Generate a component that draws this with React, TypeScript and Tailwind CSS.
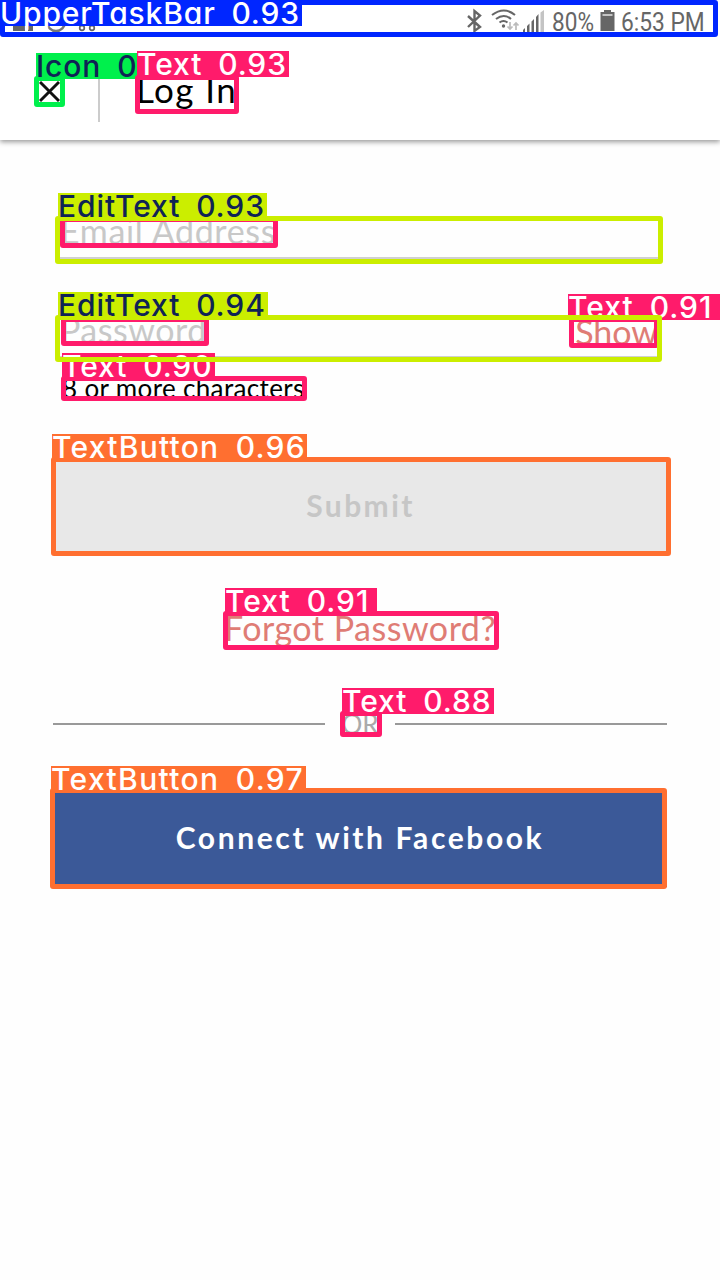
import React from "react";

type Mark = {
  label: string;
  box: string;
  tag: string;
};

const tagFont =
  "absolute whitespace-pre font-['Inter',sans-serif] font-medium text-[30px] leading-[27px] [font-feature-settings:'cv11'] ";

const marks: Mark[] = [
  {
    label: "Text 0.91",
    box: "left-[569px] top-[317px] w-[90px] h-[31px] border-[#ff1b6b]",
    tag: "left-[568px] top-[294px] w-[152px] h-[26px] bg-[#ff1b6b] text-white tracking-[1px] [word-spacing:7px]",
  },
  {
    label: "",
    box: "left-[60px] top-[217px] w-[218px] h-[31px] border-[#ff1b6b]",
    tag: "hidden",
  },
  {
    label: "",
    box: "left-[61px] top-[317px] w-[148px] h-[29px] border-[#ff1b6b]",
    tag: "hidden",
  },
  {
    label: "Text 0.90",
    box: "left-[61px] top-[376px] w-[246px] h-[25px] border-[#ff1b6b]",
    tag: "left-[62px] top-[353px] w-[153px] h-[26px] bg-[#ff1b6b] text-white tracking-[0.9px] [word-spacing:7px]",
  },
  {
    label: "EditText 0.93",
    box: "left-[55px] top-[216px] w-[608px] h-[48px] border-[#cbee00]",
    tag: "left-[58px] top-[193px] w-[209px] h-[26px] bg-[#cbee00] text-[#0f2355] tracking-[0.9px] [word-spacing:7px]",
  },
  {
    label: "EditText 0.94",
    box: "left-[55px] top-[315px] w-[607px] h-[47px] border-[#cbee00]",
    tag: "left-[58px] top-[292px] w-[210px] h-[26px] bg-[#cbee00] text-[#0f2355] tracking-[0.9px] [word-spacing:7px]",
  },
  {
    label: "Icon 0",
    box: "left-[34px] top-[76px] w-[31px] h-[31px] border-[#00f04c]",
    tag: "left-[36px] top-[53px] w-[101px] h-[26px] bg-[#00f04c] text-[#0f2355] tracking-[0.9px] [word-spacing:7px]",
  },
  {
    label: "Text 0.93",
    box: "left-[135px] top-[75px] w-[104px] h-[39px] border-[#ff1b6b]",
    tag: "left-[137px] top-[51px] w-[152px] h-[26px] bg-[#ff1b6b] text-white tracking-[0.9px] [word-spacing:7px]",
  },
  {
    label: "TextButton 0.96",
    box: "left-[51px] top-[457px] w-[620px] h-[99px] border-[#ff6f30]",
    tag: "left-[52px] top-[434px] w-[255px] h-[26px] bg-[#ff6f30] text-white tracking-[1.25px] [word-spacing:7px]",
  },
  {
    label: "Text 0.91",
    box: "left-[223px] top-[611px] w-[276px] h-[39px] border-[#ff1b6b]",
    tag: "left-[225px] top-[588px] w-[152px] h-[26px] bg-[#ff1b6b] text-white tracking-[1px] [word-spacing:7px]",
  },
  {
    label: "Text 0.88",
    box: "left-[340px] top-[711px] w-[42px] h-[26px] border-[#ff1b6b]",
    tag: "left-[342px] top-[688px] w-[152px] h-[26px] bg-[#ff1b6b] text-white tracking-[0.9px] [word-spacing:7px]",
  },
  {
    label: "TextButton 0.97",
    box: "left-[50px] top-[788px] w-[617px] h-[101px] border-[#ff6f30]",
    tag: "left-[51px] top-[766px] w-[255px] h-[26px] bg-[#ff6f30] text-white tracking-[1.35px] [word-spacing:7px]",
  },
  {
    label: "UpperTaskBar 0.93",
    box: "left-[0px] top-[0px] w-[718px] h-[37px] border-[#0026ff]",
    tag: "left-[0px] top-[0px] w-[302px] h-[26px] bg-[#0026ff] text-white tracking-[0.85px] [word-spacing:7px]",
  },
];

function Detection({ mark }: { mark: Mark }) {
  return (
    <>
      <div className={"absolute rounded-[3px] border-[5px] " + mark.box} />
      {mark.label && <div className={tagFont + mark.tag}>{mark.label}</div>}
    </>
  );
}

function StatusBar() {
  return (
    <div className="flex h-[37px] items-start justify-between pl-3 pr-[13px] text-[#666]">
      <svg width="90" height="34" viewBox="0 0 90 34" fill="none">
        <path d="M1 14h12v17H1zM16 14h5v17h-5z" fill="#666" />
        <circle cx="44" cy="22" r="9" stroke="#777" strokeWidth="2.5" />
        <circle cx="70" cy="28" r="2.3" stroke="#666" strokeWidth="1.7" />
        <circle cx="80" cy="28" r="2.3" stroke="#666" strokeWidth="1.7" />
      </svg>
      <div className="flex h-[34px] items-start">
        <svg width="82" height="34" viewBox="0 0 82 34" fill="none">
          <path d="M1 16l12 11-5.500 4V11l5.500 4.500L1 27" stroke="#666" strokeWidth="2.4" />
          <g stroke="#666" strokeWidth="2.1">
            <path d="M25 15q12-9 23 0M29 19q8-6 15 0M32.500 22.500q4-3 8 0" />
          </g>
          <circle cx="36.500" cy="26" r="1.700" fill="#666" />
          <path d="M43 22v7m-2.500-2.500L43 29l2.500-2.500M49 30v-7m-2.500 2.500L49 23l2.500 2.500" stroke="#bbb" strokeWidth="1.700" />
          <path d="M56 32v-2l2-2v4zM60 32v-6l2.500-2.500V32zM64.500 32V21.500L67 19v13zM69 32V17l2.500-3v18z" fill="#666" />
          <path d="M73.500 32V12.500L77 10v22z" fill="#c4c4c4" />
        </svg>
        <span className="ml-[3px] mt-[7px] w-[45px] origin-left scale-x-[0.87] whitespace-nowrap font-['Roboto',sans-serif] text-[26px] leading-[30px]">
          80%
        </span>
        <svg className="ml-[3px]" width="15" height="34" viewBox="0 0 15 34">
          <path d="M4 10h7v2h3.500v19H.5V12H4z" fill="#666" />
          <path d="M2.500 14h10v2h-10z" fill="#c4c4c4" />
        </svg>
        <span className="ml-[6px] mt-[7px] w-[86px] origin-left scale-x-[0.875] whitespace-nowrap font-['Roboto',sans-serif] text-[26px] leading-[30px]">
          6:53 PM
        </span>
      </div>
    </div>
  );
}

export default function App() {
  return (
    <div className="relative flex h-[1280px] w-[720px] flex-col overflow-hidden bg-[#fefefe] font-['Lato',sans-serif]">
      <header className="h-[140px] shrink-0 bg-white shadow-[0_2px_5px_rgba(0,0,0,0.4)]">
        <StatusBar />
        <div className="flex items-start pl-[39px] pt-[22px]">
          <svg className="mt-[22px]" width="21" height="21" viewBox="0 0 21 21" stroke="#111" strokeWidth="2.900">
            <path d="M1 1l19 19M20 1L1 20" />
          </svg>
          <div className="ml-[38px] h-[63px] w-[2px] bg-[#ccc]" />
          <h1 className="ml-[36px] mt-[10px] whitespace-nowrap text-[35px] leading-[40px] tracking-[1.4px] text-black">Log In</h1>
        </div>
      </header>

      <main className="flex flex-col px-[53px] pt-[69px]">
        <div className="ml-[4px] flex h-[50px] w-[604px] items-start border-b-2 border-[#d0d0d0] pl-[3px]">
          <span className="whitespace-nowrap text-[34px] leading-[44px] tracking-[0.65px] text-[#c8c8c8]">Email Address</span>
        </div>
        <div className="ml-[4px] mt-[49px] flex h-[50px] w-[603px] items-start justify-between border-b-2 border-[#d0d0d0] pl-[3px] pr-[2px]">
          <span className="whitespace-nowrap text-[34px] leading-[44px] tracking-[0.5px] text-[#c8c8c8]">Password</span>
          <span className="whitespace-nowrap text-[34px] leading-[47px] text-[#df7c75]">Show</span>
        </div>
        <p className="mt-[15px] whitespace-nowrap pl-[9px] text-[26px] leading-[30px] tracking-[0.35px] text-black">8 or more characters</p>
        <button className="mt-[56px] flex h-[94px] w-[615px] items-center justify-center bg-[#e8e8e8] pb-[2px] text-[30px] font-bold tracking-[2.4px] text-[#c6c6c6]">
          Submit
        </button>
        <a className="mt-[53px] self-center whitespace-nowrap text-[34px] leading-[44px] tracking-[0.5px] text-[#df7c75]">Forgot Password?</a>
        <div className="mt-[59px] flex h-[30px] items-center justify-between">
          <div className="h-[2px] w-[272px] bg-[#999]" />
          <span className="text-[26px] leading-[30px] text-[#aaa]">OR</span>
          <div className="h-[2px] w-[272px] bg-[#999]" />
        </div>
        <button className="mt-[54px] flex h-[94px] w-full items-center justify-center whitespace-nowrap bg-[#3b5998] pb-[6px] text-[30px] font-bold tracking-[2.600px] text-white">
          Connect with Facebook
        </button>
      </main>

      {marks.map((mark, i) => (
        <Detection key={i} mark={mark} />
      ))}
    </div>
  );
}
